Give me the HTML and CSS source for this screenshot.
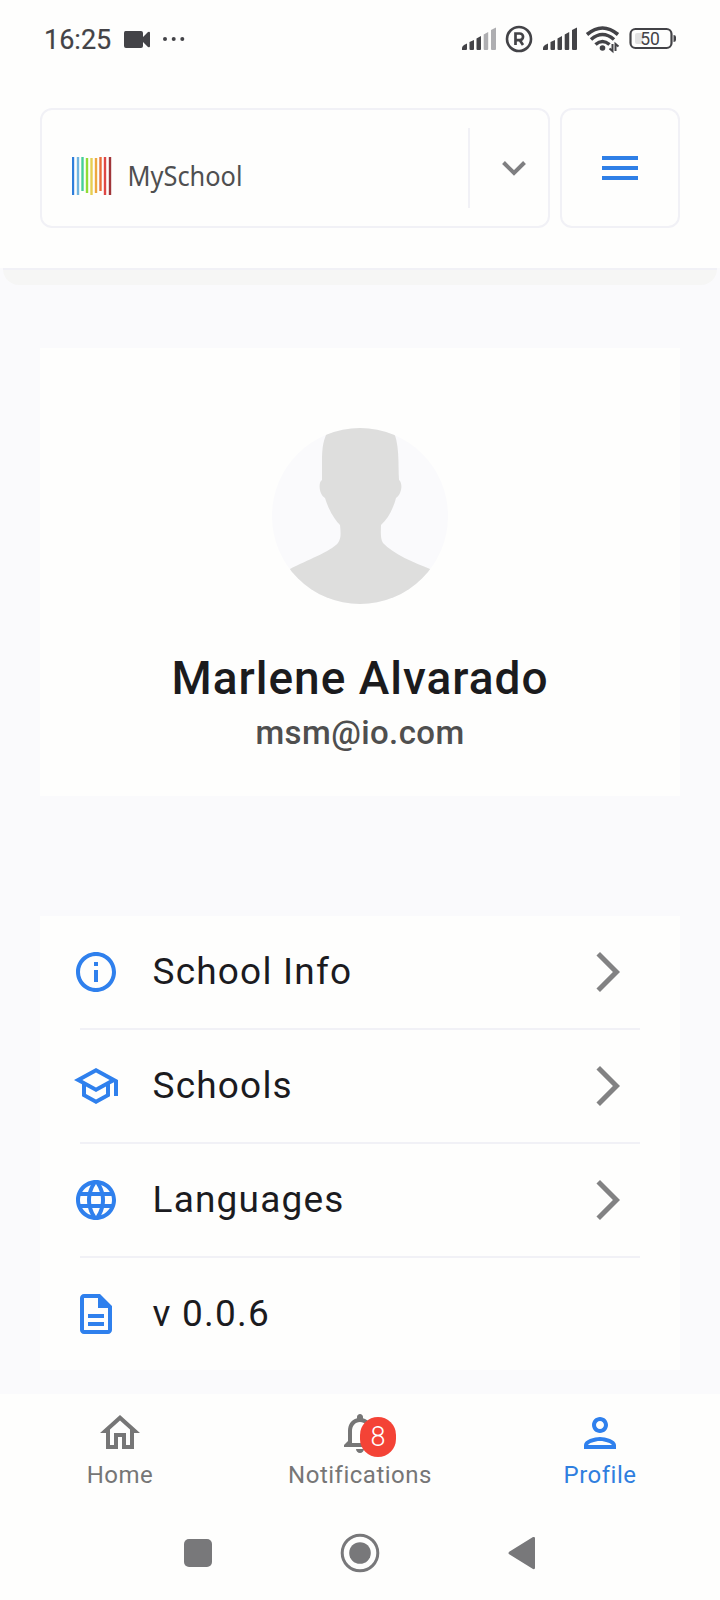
FILE: index.html
```html
<!DOCTYPE html>
<html lang="en">
<head>
<meta charset="utf-8">
<title>MySchool</title>
<link rel="stylesheet" href="styles.css">
</head>
<body>
<div class="screen">
  <div class="status">
    <span class="time">16:25</span>
    <svg class="status-left" width="62" height="24" viewBox="0 0 62 24" fill="#434347"><path d="M1.500 3h15.500a2 2 0 0 1 2 2v4l5-5q2-1 2 1v13q0 2-2 1l-5-5v4a2 2 0 0 1-2 2H2a2 2 0 0 1-2-2V5q0-2 1.500-2z"/><circle cx="41" cy="11" r="2"/><circle cx="49.700" cy="11" r="2"/><circle cx="58.300" cy="11" r="2"/></svg>
    <svg class="status-right" width="216" height="30" viewBox="0 0 216 30">
      <g id="bars" fill="#434347">
        <path d="M0 26v-2q0-1.500 2-3l3-1.500V25q0 1-1 1z"/>
        <path d="M7.500 18l4.500-2v9q0 1-1 1H8.500q-1 0-1-1z"/>
        <path d="M14.500 14.500l4.500-2.500v13q0 1-1 1h-2.500q-1 0-1-1z"/>
      </g>
      <g fill="#aeaeb1"><path d="M21.700 10.500l4.500-2.500v17q0 1-1 1h-2.500q-1 0-1-1z"/><path d="M29 6l5-2.500V25q0 1-1 1h-3q-1 0-1-1z"/></g>
      <circle cx="57" cy="15" r="12" fill="none" stroke="#434347" stroke-width="2.600"/>
      <path d="M53.500 21V9.500h4.200a3.200 3.200 0 0 1 0 6.700h-4M58 16.500l3 4.500" fill="none" stroke="#434347" stroke-width="2.700"/>
      <g fill="#434347"><use href="#bars" x="81"/><path d="M102.700 10.500l4.500-2.500v17q0 1-1 1h-2.500q-1 0-1-1zM110 6l5-2.500V25q0 1-1 1h-3q-1 0-1-1z"/></g>
      <g fill="none" stroke="#434347" stroke-width="3.600"><path d="M125 10.500q15.500-13 31 0"/><path d="M129 15.500q11.500-10 23 0"/><path d="M133.500 20.500q7-6 14 0"/></g>
      <circle cx="140.500" cy="24" r="2.800" fill="#434347"/>
      <path d="M150.500 20v7l-3-2.500M153.500 27v-7l3 2.500" fill="none" stroke="#434347" stroke-width="2"/>
      <rect x="168.500" y="5" width="41" height="19" rx="5" fill="none" stroke="#434347" stroke-width="2.200"/>
      <rect x="173" y="9" width="8" height="11" rx="2" fill="#e2e2e2"/>
      <path d="M211.500 11q2.500 0 2.500 2v3q0 2-2.500 2z" fill="#434347"/>
      <text class="battery" x="188" y="21">50</text>
    </svg>
  </div>
  <header class="header">
    <div class="picker">
      <svg class="logo" width="180" height="50" viewBox="0 0 180 50">
        <g>
          <path d="M1 6v38" stroke="#2f7edb"/><path d="M6 6v38" stroke="#71b5e0"/><path d="M10.500 6v34" stroke="#45cf98"/><path d="M15 7v35" stroke="#91dc36"/><path d="M19.500 7v37" stroke="#e6cf52"/><path d="M24 7v35" stroke="#eda83f"/><path d="M28.500 6v34" stroke="#e96c38"/><path d="M33 6v38" stroke="#df4744"/><path d="M38 6v38" stroke="#a03539"/>
        </g>
        <text class="brand" x="55.500" y="34.500" textLength="115" lengthAdjust="spacingAndGlyphs">MySchool</text>
      </svg>
      <div class="drop"><svg width="24" height="16" viewBox="0 0 24 16"><path d="M1.500 1.500L12 12L22.500 1.500" fill="none" stroke="#7f7f81" stroke-width="4"/></svg></div>
    </div>
    <div class="menu"><i></i><i></i><i></i></div>
  </header>
  <div class="shade"></div>
  <main class="main">
    <section class="card profile">
      <svg class="avatar" width="176" height="176" viewBox="0 0 176 176"><defs><clipPath id="round"><circle cx="88" cy="88" r="88"/></clipPath></defs><g clip-path="url(#round)"><rect width="176" height="176" fill="#fafafc"/><path d="M58 0C51 10 50 20 50 34V52C46 54 47 67 53 70C57 83 63 92 68 97C69 107 69 110 66 115C58 124 35 132 18 141V176H158V141C143 135 121 126 111 115C108 110 109 103 109 97C117 90 122 78 124 70C130 66 131 55 127 52C126 35 128 15 120 0Z" fill="#dededd"/></g></svg>
      <h1>Marlene Alvarado</h1>
      <p>msm@io.com</p>
    </section>
    <section class="card list">
      <div class="row"><svg class="icon" viewBox="0 0 24 24"><path d="M11 7h2v2h-2zm0 4h2v6h-2zm1-9C6.480 2 2 6.480 2 12s4.480 10 10 10 10-4.480 10-10S17.520 2 12 2zm0 18c-4.410 0-8-3.590-8-8s3.590-8 8-8 8 3.590 8 8-3.590 8-8 8z"/></svg><span>School Info</span><svg class="arrow" viewBox="0 0 24 24"><path d="M6.230 20.230L8 22 18 12 8 2 6.230 3.770 14.460 12z"/></svg></div>
      <div class="row"><svg class="icon" viewBox="0 0 24 24"><path d="M12 3L1 9l4 2.180v6L12 21l7-3.820v-6l2-1.090V17h2V9L12 3zm6.820 6L12 12.720 5.180 9 12 5.280 18.820 9zM17 15.990l-5 2.730-5-2.730v-3.720L12 15l5-2.730v3.720z"/></svg><span>Schools</span><svg class="arrow" viewBox="0 0 24 24"><path d="M6.230 20.230L8 22 18 12 8 2 6.230 3.770 14.460 12z"/></svg></div>
      <div class="row"><svg class="icon" viewBox="0 0 24 24"><path d="M11.990 2C6.470 2 2 6.480 2 12s4.470 10 9.990 10C17.520 22 22 17.520 22 12S17.520 2 11.990 2zm6.930 6h-2.950c-.320-1.250-.780-2.450-1.380-3.560 1.840.630 3.370 1.910 4.330 3.560zM12 4.040c.830 1.200 1.480 2.530 1.910 3.960h-3.820c.430-1.430 1.080-2.760 1.910-3.960zM4.260 14C4.100 13.360 4 12.690 4 12s.100-1.360.260-2h3.380c-.080.660-.140 1.320-.140 2s.060 1.340.140 2H4.260zm.820 2h2.950c.320 1.250.780 2.450 1.380 3.560-1.840-.630-3.370-1.900-4.330-3.560zm2.950-8H5.080c.960-1.660 2.490-2.930 4.330-3.560C8.810 5.550 8.350 6.750 8.030 8zM12 19.960c-.830-1.200-1.480-2.530-1.910-3.960h3.820c-.430 1.430-1.080 2.760-1.910 3.960zM14.340 14H9.660c-.090-.660-.160-1.320-.160-2s.070-1.350.160-2h4.680c.090.650.160 1.320.160 2s-.070 1.340-.160 2zm.250 5.560c.600-1.110 1.060-2.310 1.380-3.560h2.950c-.960 1.650-2.490 2.930-4.330 3.560zM16.360 14c.080-.660.140-1.320.140-2s-.060-1.340-.140-2h3.380c.160.640.260 1.310.260 2s-.100 1.360-.260 2h-3.380z"/></svg><span>Languages</span><svg class="arrow" viewBox="0 0 24 24"><path d="M6.230 20.230L8 22 18 12 8 2 6.230 3.770 14.460 12z"/></svg></div>
      <div class="row"><svg class="icon" viewBox="0 0 24 24"><path d="M8 16h8v2H8zm0-4h8v2H8zm6-10H6c-1.100 0-2 .900-2 2v16c0 1.100.890 2 1.990 2H18c1.100 0 2-.900 2-2V8l-6-6zm4 18H6V4h7v5h5v11z"/></svg><span>v 0.0.6</span></div>
    </section>
  </main>
  <nav class="tabs">
    <div class="tab"><svg viewBox="0 0 24 24"><path d="M12 5.690l5 4.500V18h-2v-6H9v6H7v-7.810l5-4.500M12 3L2 12h3v8h6v-6h2v6h6v-8h3L12 3z"/></svg><span>Home</span></div>
    <div class="tab"><svg viewBox="0 0 24 24"><path d="M12 22c1.100 0 2-.900 2-2h-4c0 1.100.900 2 2 2zm6-6v-5c0-3.070-1.630-5.640-4.500-6.320V4c0-.830-.670-1.500-1.500-1.500s-1.500.670-1.500 1.500v.680C7.640 5.360 6 7.920 6 11v5l-2 2v1h16v-1l-2-2zm-2 1H8v-6c0-2.480 1.510-4.500 4-4.500s4 2.020 4 4.500v6z"/></svg><b class="badge">8</b><span>Notifications</span></div>
    <div class="tab active"><svg viewBox="0 0 24 24"><path d="M12 6c1.100 0 2 .900 2 2s-.900 2-2 2-2-.900-2-2 .900-2 2-2m0 10c2.700 0 5.800 1.290 6 2H6c.230-.720 3.310-2 6-2m0-12C9.790 4 8 5.790 8 8s1.790 4 4 4 4-1.790 4-4-1.790-4-4-4zm0 10c-2.670 0-8 1.340-8 4v2h16v-2c0-2.660-5.330-4-8-4z"/></svg><span>Profile</span></div>
  </nav>
  <div class="system">
    <svg width="40" height="40" viewBox="0 0 40 40"><rect x="6" y="6" width="28" height="28" rx="5"/></svg>
    <svg width="40" height="40" viewBox="0 0 40 40"><circle cx="20" cy="20" r="17.800" fill="none" stroke="#78787a" stroke-width="3"/><circle cx="20" cy="20" r="10.800"/></svg>
    <svg width="40" height="40" viewBox="0 0 40 40"><path d="M7.200 18.700L31 4q2-.500 2 1v30q0 1.500-2 1L7.200 21.300q-1.500-1.300 0-2.600z"/></svg>
  </div>
</div>
</body>
</html>
```
FILE: styles.css
```css
* { box-sizing: border-box; }
body { margin: 0; background: #fafafc; font-family: Roboto, sans-serif; }
.screen { width: 720px; height: 1600px; display: flex; flex-direction: column; overflow: hidden; }
svg { display: block; flex: none; }

.status { height: 78px; background: #fefefd; display: flex; align-items: center; padding: 0 42px 0 44px; color: #434347; }
.time { font-size: 27px; line-height: 32px; width: 80px; padding-top: 2px; -webkit-text-stroke: 0.2px #434347; }
.status-right { margin-left: auto; }
.status-left { margin-top: 2px; }
.battery { font-size: 17.5px; fill: #434347; text-anchor: middle; }

.header { height: 190px; background: #fefefd; display: flex; gap: 10px; padding: 30px 40px 40px; }
.picker { width: 510px; border: 2px solid #f1f1f6; border-radius: 12px; display: flex; align-items: center; justify-content: space-between; padding-left: 30px; }
.logo { margin-top: 15px; }
.brand { font-family: "Noto Sans", sans-serif; font-size: 27px; fill: #4f4f50; }
.logo path { stroke-width: 2.4; }
.drop { width: 80px; height: 80px; border-left: 2px solid #f1f1f6; display: flex; align-items: center; padding: 2px 0 0 32px; }
.menu { width: 120px; border: 2px solid #f1f1f6; border-radius: 12px; display: flex; flex-direction: column; align-items: center; justify-content: center; gap: 6px; }
.menu i { width: 36px; height: 4px; background: #2f7fe6; }
.shade { height: 17px; margin: 0 3px; background: #f6f6f5; border-top: 2px solid #f1f1f6; border-radius: 0 0 16px 16px; }

.main { flex: 1; padding: 63px 40px 0; }
.card { background: #fefefd; }
.profile { height: 448px; padding-top: 80px; display: flex; flex-direction: column; align-items: center; }
.profile h1 { margin: 46px 0 0; font-size: 46px; font-weight: 500; line-height: 56px; letter-spacing: 1px; color: #1b1b1d; white-space: nowrap; }
.profile p { margin: 7px 0 0; font-size: 33px; font-weight: 500; line-height: 40px; letter-spacing: 0.4px; color: #4f4f4f; }
.list { margin-top: 120px; height: 454px; }
.row { height: 114px; padding: 0 8px 2px 32px; display: flex; align-items: center; gap: 32.5px; position: relative; color: #1b1b1f; font-size: 37px; letter-spacing: 1.2px; }
.row span { padding-bottom: 2px; }
.row:last-child { height: 112px; padding-bottom: 0; }
.row:not(:last-child)::after { content: ""; position: absolute; left: 40px; right: 40px; bottom: 0; height: 2px; background: #f1f1f6; }
.icon { width: 48px; height: 48px; fill: #2f80ed; }
.arrow { width: 48px; height: 48px; fill: #828283; margin: 0 40px 0 auto; }

.tabs { height: 112px; background: #fefefd; display: flex; padding-top: 15px; color: #767676; font-size: 24px; line-height: 28px; letter-spacing: 0.5px; }
.tab { flex: 1; display: flex; flex-direction: column; align-items: center; position: relative; }
.tab svg { width: 48px; height: 48px; fill: currentColor; }
.tab span { margin-top: 4px; }
.active { color: #2f80ed; }
.active span { color: #2f7fdf; }
.badge { position: absolute; left: 120px; top: 8px; width: 36px; height: 40px; border-radius: 18px; background: #f44336; color: #fff; font-weight: 300; font-size: 27px; line-height: 40px; text-align: center; letter-spacing: 0; }
.system { height: 94px; background: #fefefd; display: flex; justify-content: center; gap: 122px; padding-top: 27px; fill: #78787a; }
```
